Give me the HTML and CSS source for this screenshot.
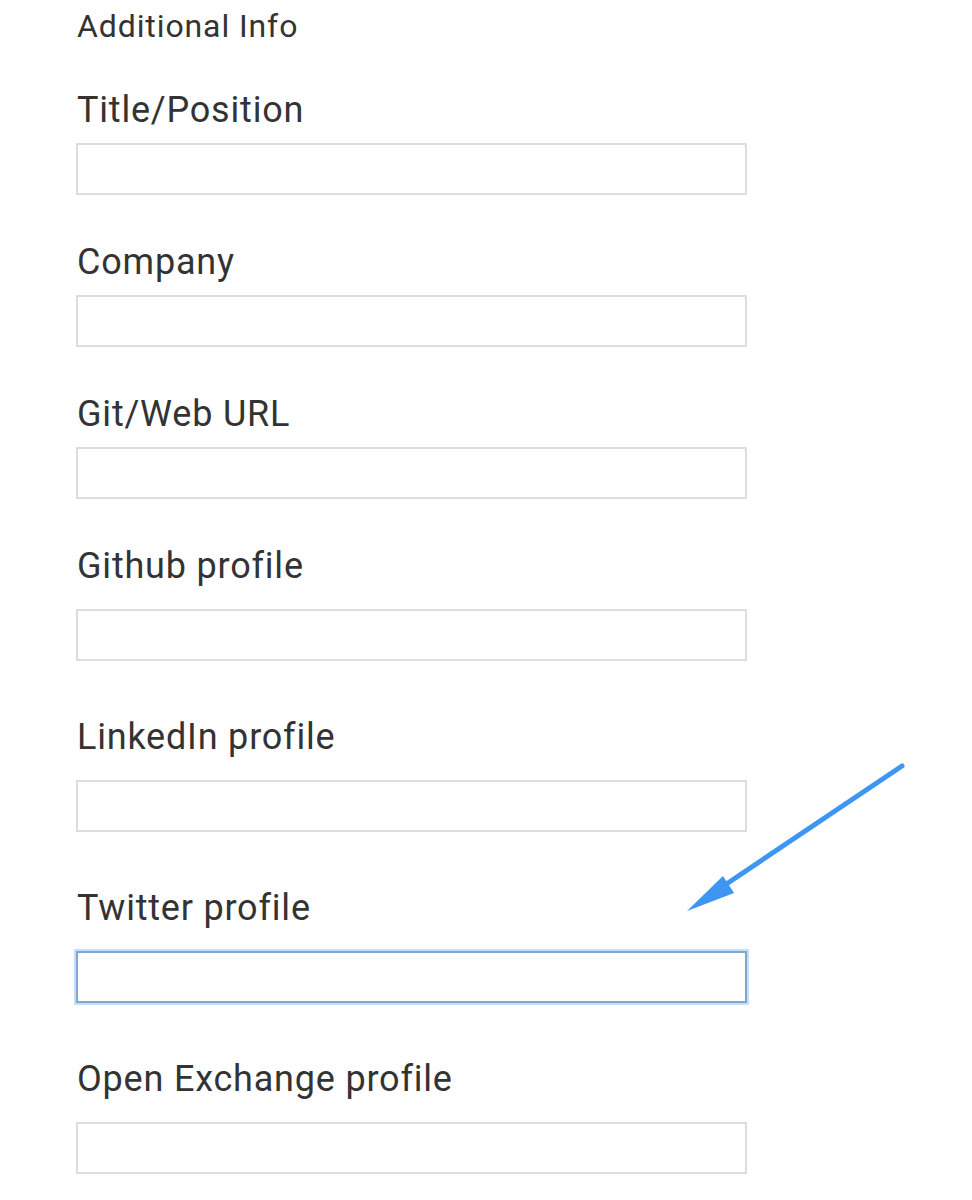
FILE: index.html
```html
<!DOCTYPE html>
<html lang="en">
<head>
<meta charset="utf-8">
<title>Additional Info</title>
<link rel="stylesheet" href="styles.css">
</head>
<body>
<main class="form">
  <h2 class="section-title">Additional Info</h2>
  <div class="field field--first">
    <label class="label" for="title">Title/Position</label>
    <input class="input" id="title" type="text">
  </div>
  <div class="field">
    <label class="label" for="company">Company</label>
    <input class="input" id="company" type="text">
  </div>
  <div class="field">
    <label class="label" for="weburl">Git/Web URL</label>
    <input class="input" id="weburl" type="text">
  </div>
  <div class="field field--spaced field--github">
    <label class="label" for="github">Github profile</label>
    <input class="input" id="github" type="text">
  </div>
  <div class="field field--spaced">
    <label class="label" for="linkedin">LinkedIn profile</label>
    <input class="input" id="linkedin" type="text">
  </div>
  <div class="field field--spaced">
    <label class="label" for="twitter">Twitter profile</label>
    <input class="input input--focus" id="twitter" type="text">
  </div>
  <div class="field field--spaced">
    <label class="label" for="openexchange">Open Exchange profile</label>
    <input class="input" id="openexchange" type="text">
  </div>
</main>
<svg class="arrow" width="972" height="1200" viewBox="0 0 972 1200" aria-hidden="true">
  <line x1="902" y1="766" x2="722" y2="887" stroke="#3d96f2" stroke-width="5" stroke-linecap="round"/>
  <polygon points="687,911 723,876 734,893" fill="#3d96f2"/>
</svg>
</body>
</html>
```

FILE: styles.css
```css
html, body {
  margin: 0;
  padding: 0;
  background: #ffffff;
}

body {
  font-family: Roboto, "Liberation Sans", Arial, sans-serif;
  color: #333333;
  position: relative;
  width: 972px;
  height: 1200px;
  overflow: hidden;
}

.form {
  display: flex;
  flex-direction: column;
  padding-left: 76px;
  width: 671px;
}

.section-title {
  margin: 0 0 2px;
  padding-top: 8px;
  font-size: 32px;
  line-height: 36px;
  letter-spacing: 0.9px;
  font-weight: 400;
  padding-left: 1px;
}

.field {
  display: flex;
  flex-direction: column;
  margin-top: 47px;
}

.field--first {
  margin-top: 44px;
}

.field--spaced {
  margin-top: 56px;
}

.field--github.field--spaced {
  margin-top: 47px;
}

.label {
  display: block;
  font-size: 36px;
  line-height: 40px;
  letter-spacing: 0.8px;
  padding-left: 1px;
  margin-bottom: 13px;
}

.field--spaced .label {
  margin-bottom: 23px;
}

.input {
  box-sizing: border-box;
  width: 671px;
  height: 52px;
  margin: 0;
  padding: 0 10px;
  border: 2px solid #dddddd;
  border-radius: 0;
  background: #ffffff;
  font: inherit;
  outline: none;
}

.input--focus {
  border-color: #7ea8d2;
  box-shadow: 0 0 0 2px #c6def7;
}

.arrow {
  position: absolute;
  left: 0;
  top: 0;
  pointer-events: none;
}
```
